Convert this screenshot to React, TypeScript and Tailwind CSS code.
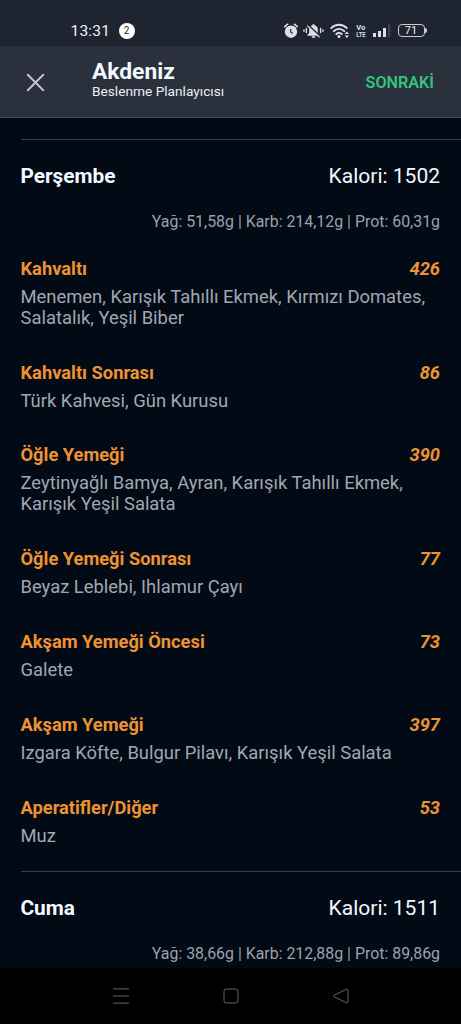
import { X } from 'lucide-react'

interface Meal {
  name: string
  calories: number
  foods: string
}

interface Day {
  name: string
  calories: number
  macros: string
  meals: Meal[]
}

const days: Day[] = [
  {
    name: 'Perşembe',
    calories: 1502,
    macros: 'Yağ: 51,58g | Karb: 214,12g | Prot: 60,31g',
    meals: [
      { name: 'Kahvaltı', calories: 426, foods: 'Menemen, Karışık Tahıllı Ekmek, Kırmızı Domates, Salatalık, Yeşil Biber' },
      { name: 'Kahvaltı Sonrası', calories: 86, foods: 'Türk Kahvesi, Gün Kurusu' },
      { name: 'Öğle Yemeği', calories: 390, foods: 'Zeytinyağlı Bamya, Ayran, Karışık Tahıllı Ekmek, Karışık Yeşil Salata' },
      { name: 'Öğle Yemeği Sonrası', calories: 77, foods: 'Beyaz Leblebi, Ihlamur Çayı' },
      { name: 'Akşam Yemeği Öncesi', calories: 73, foods: 'Galete' },
      { name: 'Akşam Yemeği', calories: 397, foods: 'Izgara Köfte, Bulgur Pilavı, Karışık Yeşil Salata' },
      { name: 'Aperatifler/Diğer', calories: 53, foods: 'Muz' },
    ],
  },
  {
    name: 'Cuma',
    calories: 1511,
    macros: 'Yağ: 38,66g | Karb: 212,88g | Prot: 89,86g',
    meals: [],
  },
]

function AlarmIcon() {
  return (
    <svg width="14" height="16" viewBox="0 0 14 16">
      <circle cx="7" cy="8.7" r="6.2" fill="#dde0e8" />
      <path d="M.7 3.7 3.7 1.2M13.3 3.7l-3-2.5" stroke="#dde0e8" strokeWidth="1.5" strokeLinecap="round" />
      <path d="M6.7 6v3l2 1.4" stroke="#1f2530" strokeWidth="1.2" fill="none" />
    </svg>
  )
}

function MutedBellIcon() {
  return (
    <svg width="21" height="16" viewBox="0 0 21 16">
      <path d="M10.5 1.2c.8 0 1.2.5 1.2 1.1 2 .6 3.1 2.2 3.1 4.4v3.2l1.7 1.9v1H4.5v-1l1.7-1.9V6.7c0-2.2 1.1-3.8 3.1-4.4 0-.6.4-1.1 1.2-1.1zM8.6 13.2h3.8c-.2 1.1-.9 1.8-1.9 1.8s-1.7-.7-1.9-1.8z" fill="#dde0e8" />
      <path d="M5 1.8 17.4 13.4" stroke="#1f2530" strokeWidth="1.5" />
      <path d="M4.2 2.6 16.6 14.4" stroke="#dde0e8" strokeWidth="1.3" />
      <path d="M3.4 5.4v4.2M1 7v1.2M17.6 5.4v4.2M20 7v1.2" stroke="#dde0e8" strokeWidth="1.4" strokeLinecap="round" />
    </svg>
  )
}

function WifiIcon() {
  return (
    <svg width="20" height="16" viewBox="0 0 20 16" fill="none">
      <path d="M1.2 5.1c4.4-4.5 11.2-4.5 15.6 0M3.8 8.2c3-3.1 7.4-3.1 10.4 0M6.4 11c1.5-1.5 3.7-1.5 5.2 0" stroke="#dde0e8" strokeWidth="1.9" strokeLinecap="round" />
      <circle cx="9" cy="13.5" r="1.5" fill="#dde0e8" />
      <path d="m14.6 11 2.2-2.5L19 11zM14.6 12.4l2.2 2.5 2.2-2.5z" fill="#dde0e8" />
    </svg>
  )
}

function VolteIcon() {
  return (
    <svg width="10" height="18" viewBox="0 0 10 18" fill="#dde0e8" className="overflow-visible text-[8px] font-bold">
      <text x=".3" y="8" textLength="9" lengthAdjust="spacingAndGlyphs">Vo</text>
      <text x=".3" y="15.3" textLength="9.2" lengthAdjust="spacingAndGlyphs">LTE</text>
    </svg>
  )
}

function SignalIcon() {
  return (
    <svg width="19" height="14" viewBox="0 0 19 14">
      <path d="M1 9h3v4H1zM6 7h3v6H6zM11 4h3v9h-3z" fill="#dde0e8" />
      <path d="M16 .5h2.3V13H16z" fill="#3d434f" />
    </svg>
  )
}

function StatusBar() {
  return (
    <div className="flex h-[46px] shrink-0 items-center bg-[#1f2530] pl-[70.5px] pt-[15px] text-[#f0f2f7]">
      <span className="w-[40px] whitespace-nowrap text-[15.5px] leading-4 tracking-[0.2px]">13:31</span>
      <span className="ml-[8px] flex size-4 items-center justify-center rounded-full bg-white text-[10px] leading-none text-[#1f2530]">2</span>
      <div className="ml-[149px] flex h-4 items-center">
        <AlarmIcon />
        <div className="ml-[5.5px]"><MutedBellIcon /></div>
        <div className="ml-[5.5px]"><WifiIcon /></div>
        <div className="ml-[6px]"><VolteIcon /></div>
        <div className="ml-[6px]"><SignalIcon /></div>
        <div className="ml-[7px] flex h-[13px] w-[27px] items-center justify-center rounded-[4px] border border-[#c9cdd6] text-[11px] leading-none">71</div>
        <div className="h-[5px] w-[2px] rounded-r-full bg-[#c9cdd6]" />
      </div>
    </div>
  )
}

function Header() {
  return (
    <header className="flex h-[72px] shrink-0 items-center border-b border-[#464c56] bg-[#2a303c] pl-[20px] pr-[27px]">
      <button aria-label="Kapat" className="pt-px">
        <X size={31} strokeWidth={2} absoluteStrokeWidth className="text-[#c3c6ce]" />
      </button>
      <div className="ml-[41px] flex-1 pb-[5px]">
        <h1 className="text-[22.8px] font-bold leading-6 text-[#f4f8ff]">Akdeniz</h1>
        <p className="text-[13.7px] leading-[14px] text-[#eceff5]">Beslenme Planlayıcısı</p>
      </div>
      <button className="pt-[3px] text-[16.2px] font-semibold text-[#34c47c]">SONRAKİ</button>
    </header>
  )
}

function MealRow({ meal }: { meal: Meal }) {
  return (
    <div>
      <div className="flex justify-between text-[18.3px] font-bold leading-6 text-[#ee9232]">
        <h3>{meal.name}</h3>
        <span className="italic">{meal.calories}</span>
      </div>
      <p className="mt-[5px] text-[18.4px] leading-[21px] text-[#a2a6b1]">{meal.foods}</p>
    </div>
  )
}

function DaySection({ day }: { day: Day }) {
  return (
    <section className="ml-[20.5px] border-t border-[#343d48] pr-[21px]">
      <div className="flex h-[72px] items-center justify-between pt-[2px] text-[#f4f8ff]">
        <h2 className="text-[20.8px] font-bold">{day.name}</h2>
        <span className="text-[21px]">Kalori: {day.calories}</span>
      </div>
      <p className="relative top-px text-right text-[15.9px] leading-[18px] text-[#9ca1ac]">{day.macros}</p>
      <div className="flex flex-col gap-[32.8px] pb-[25.2px] pt-[26.8px]">
        {day.meals.map((meal) => (
          <MealRow key={meal.name} meal={meal} />
        ))}
      </div>
    </section>
  )
}

function NavBar() {
  return (
    <nav className="flex h-[56px] shrink-0 items-center justify-center gap-[94px] bg-black">
      <svg width="16" height="16" viewBox="0 0 16 16" stroke="#666" fill="none">
        <path d="M0 .9h16M0 8h16M0 15.1h16" />
      </svg>
      <svg width="16" height="16" viewBox="0 0 16 16" stroke="#666" fill="none">
        <rect x="1" y="1" width="14" height="14" rx="2.5" />
      </svg>
      <svg width="16" height="16" viewBox="0 0 16 16" stroke="#666" fill="none">
        <path d="M13.5 1.2 1.2 7.2q-1.2.8 0 1.6l12.3 6q1.5.4 1.5-1V2.2q0-1.4-1.5-1z" />
      </svg>
    </nav>
  )
}

export default function App() {
  return (
    <div className="flex h-[1024px] w-[461px] flex-col overflow-hidden bg-[#020a16] font-['Roboto',sans-serif]">
      <StatusBar />
      <Header />
      <main className="min-h-0 flex-1 overflow-hidden pt-[21px]">
        {days.map((day) => (
          <DaySection key={day.name} day={day} />
        ))}
      </main>
      <NavBar />
    </div>
  )
}
